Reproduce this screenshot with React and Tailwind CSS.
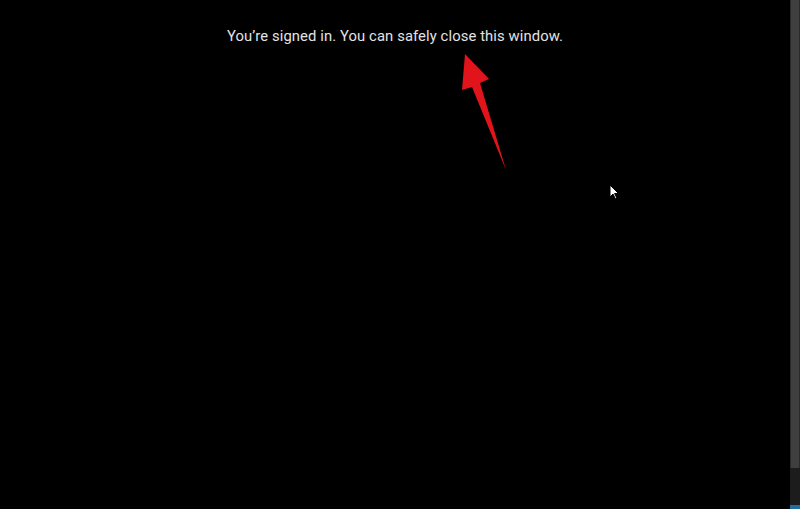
import React from 'react';

export default function App() {
    return (
        <div className="flex h-[509px] w-[800px] overflow-hidden bg-black">
            {/* page content */}
            <div className="relative flex-1">
                <p className="pt-[26px] text-center text-[14.8px] leading-[20px] tracking-[0.1px] text-[#e3e3e3] font-['Roboto','Open_Sans',sans-serif]">
                    You’re signed in. You can safely close this window.
                </p>

                {/* red annotation arrow */}
                <svg className="absolute left-0 top-0" width="790" height="509" viewBox="0 0 790 509">
                    <polygon
                        points="465,54 489,79 480,83 506,170 472,87 462,90"
                        fill="#e0141a"
                    />
                </svg>

                {/* mouse cursor */}
                <svg className="absolute left-[609px] top-[184px]" width="10" height="16" viewBox="0 0 10 16">
                    <path d="M1 1 L1 13 L4 10 L6.5 15 L8 14.3 L5.6 9.5 L9.5 9.5 Z" fill="#fff" stroke="#000" strokeWidth="1" />
                </svg>
            </div>

            {/* scrollbar */}
            <div className="flex w-[10px] flex-col bg-[#1c1c1c]">
                <div className="h-[468px] border-x border-[#2a2a2a] bg-[#3f3f3f]" />
                <div className="flex-1" />
                <div className="h-[4px] bg-[#1d6fa0]" />
            </div>
        </div>
    );
}
